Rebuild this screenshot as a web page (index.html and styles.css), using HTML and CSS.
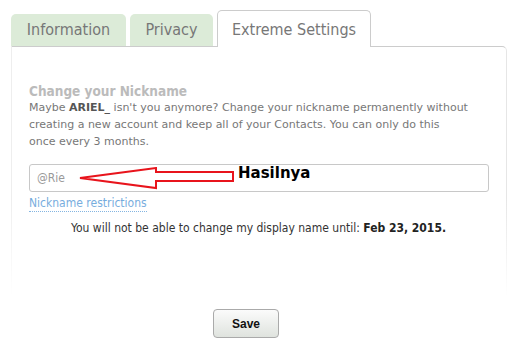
FILE: index.html
```html
<!DOCTYPE html>
<html>
<head>
<meta charset="utf-8">
<link rel="stylesheet" href="styles.css">
</head>
<body>
<div class="wrap">
  <div class="tabs">
    <div class="tab tab-info">Information</div>
    <div class="tab tab-privacy">Privacy</div>
    <div class="tab tab-active">Extreme Settings</div>
  </div>
  <div class="panel">
    <h2 class="title">Change your Nickname</h2>
    <p class="desc">Maybe <b>ARIEL_</b> isn't you anymore? Change your nickname permanently without creating a new account and keep all of your Contacts. You can only do this<br>once every 3 months.</p>
    <div class="field">
      <div class="input">@Rie</div>
      <svg class="arrow" width="160" height="24" viewBox="0 0 160 24">
        <polygon points="2,11 78,1 78,5 155,5 155,14 78,14 78,21" fill="#fff" stroke="#e8141c" stroke-width="2" stroke-linejoin="miter"/>
      </svg>
      <span class="note">Hasilnya</span>
    </div>
    <a class="restrict">Nickname restrictions</a>
    <p class="until">You will not be able to change my display name until: <b>Feb 23, 2015.</b></p>
    <div class="actions">
      <button class="save">Save</button>
    </div>
  </div>
</div>
</body>
</html>
```

FILE: styles.css
```css
html, body {
  margin: 0;
  padding: 0;
  background: #fff;
}
body {
  font-family: "DejaVu Sans Condensed", "DejaVu Sans", sans-serif;
  width: 516px;
  height: 352px;
  overflow: hidden;
}
.wrap {
  padding: 10px 9px 0 11px;
}
.tabs {
  display: flex;
  align-items: flex-end;
  height: 36px;
  position: relative;
  z-index: 1;
}
.tab {
  height: 32px;
  box-sizing: border-box;
  background: #dcebd8;
  color: #777;
  font-size: 16px;
  line-height: 32px;
  text-align: center;
  border-radius: 5px 5px 0 0;
  margin-right: 4px;
}
.tab-info { width: 115px; }
.tab-privacy { width: 83px; }
.tab-active {
  width: 154px;
  height: 37px;
  line-height: 38px;
  background: #fff;
  border: 1px solid #ccc;
  border-bottom: none;
  margin-bottom: -1px;
  margin-left: 0;
}
.panel {
  height: 300px;
  box-sizing: border-box;
  border-top: 1px solid #ccc;
  border-radius: 0 5px 0 0;
  border-left: 1px solid #eee;
  border-right: 1px solid #e6e6e6;
  padding: 36px 18px 0 17px;
  position: relative;
}
.panel::before {
  content: "";
  position: absolute;
  left: -2px;
  right: -2px;
  top: 150px;
  bottom: 0;
  background: linear-gradient(to bottom, rgba(255,255,255,0), #fff 100px);
  pointer-events: none;
}
.title {
  margin: 0;
  font-size: 13.5px;
  font-weight: bold;
  color: #bbb;
  line-height: 16px;
}
.desc {
  margin: 0;
  font-family: "DejaVu Sans", sans-serif;
  font-size: 11px;
  line-height: 17px;
  color: #777;
}
.desc b { color: #555; }
.field {
  position: relative;
  margin-top: 14px;
}
.input {
  height: 28px;
  box-sizing: border-box;
  width: 460px;
  border: 1px solid #c8c8c8;
  border-radius: 3px;
  font-size: 12px;
  line-height: 26px;
  padding-left: 7px;
  color: #999;
}
.arrow {
  position: absolute;
  left: 49px;
  top: 3px;
}
.note {
  position: absolute;
  left: 209px;
  top: 0px;
  font-family: "DejaVu Sans", sans-serif;
  font-weight: bold;
  font-size: 15px;
  color: #000;
}
.restrict {
  display: inline-block;
  margin-top: 1px;
  font-size: 12px;
  line-height: 15px;
  color: #6fa8dc;
  border-bottom: 1px dotted #6fa8dc;
}
.until {
  position: relative;
  z-index: 2;
  margin: 9px 0 0 0;
  text-align: center;
  font-size: 12px;
  color: #333;
}
.until b { color: #222; }
.actions {
  position: relative;
  z-index: 2;
  display: flex;
  justify-content: center;
  margin-top: 74px;
}
.save {
  width: 66px;
  height: 29px;
  border: 1px solid #aaa;
  border-radius: 4px;
  background: linear-gradient(to bottom, #fbfbfb, #dfe3de);
  font-family: "Liberation Sans", Arial, sans-serif;
  font-weight: bold;
  font-size: 12px;
  color: #111;
  margin-left: -25px;
}
```
